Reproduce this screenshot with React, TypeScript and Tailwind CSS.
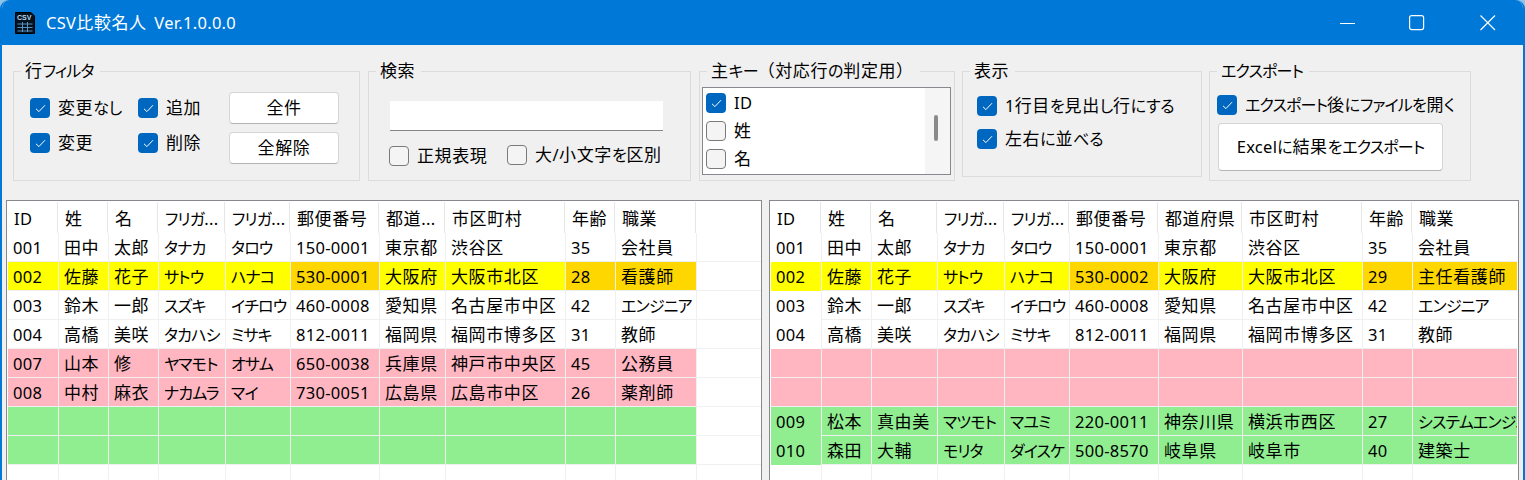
import type { ReactNode } from 'react';

type Row = { kind: 'same' | 'changed' | 'deleted' | 'added' | 'empty'; cells: string[]; gold?: number[] };

const blank = ['', '', '', '', '', '', '', '', '', ''];

const leftRows: Row[] = [
  { kind: 'same', cells: ['001', '田中', '太郎', 'タナカ', 'タロウ', '150-0001', '東京都', '渋谷区', '35', '会社員'] },
  { kind: 'changed', cells: ['002', '佐藤', '花子', 'サトウ', 'ハナコ', '530-0001', '大阪府', '大阪市北区', '28', '看護師'], gold: [5, 8, 9] },
  { kind: 'same', cells: ['003', '鈴木', '一郎', 'スズキ', 'イチロウ', '460-0008', '愛知県', '名古屋市中区', '42', 'エンジニア'] },
  { kind: 'same', cells: ['004', '高橋', '美咲', 'タカハシ', 'ミサキ', '812-0011', '福岡県', '福岡市博多区', '31', '教師'] },
  { kind: 'deleted', cells: ['007', '山本', '修', 'ヤマモト', 'オサム', '650-0038', '兵庫県', '神戸市中央区', '45', '公務員'] },
  { kind: 'deleted', cells: ['008', '中村', '麻衣', 'ナカムラ', 'マイ', '730-0051', '広島県', '広島市中区', '26', '薬剤師'] },
  { kind: 'added', cells: blank },
  { kind: 'added', cells: blank },
  { kind: 'empty', cells: blank },
];

const rightRows: Row[] = [
  { kind: 'same', cells: ['001', '田中', '太郎', 'タナカ', 'タロウ', '150-0001', '東京都', '渋谷区', '35', '会社員'] },
  { kind: 'changed', cells: ['002', '佐藤', '花子', 'サトウ', 'ハナコ', '530-0002', '大阪府', '大阪市北区', '29', '主任看護師'], gold: [5, 8, 9] },
  { kind: 'same', cells: ['003', '鈴木', '一郎', 'スズキ', 'イチロウ', '460-0008', '愛知県', '名古屋市中区', '42', 'エンジニア'] },
  { kind: 'same', cells: ['004', '高橋', '美咲', 'タカハシ', 'ミサキ', '812-0011', '福岡県', '福岡市博多区', '31', '教師'] },
  { kind: 'deleted', cells: blank },
  { kind: 'deleted', cells: blank },
  { kind: 'added', cells: ['009', '松本', '真由美', 'マツモト', 'マユミ', '220-0011', '神奈川県', '横浜市西区', '27', 'システムエンジニア'] },
  { kind: 'added', cells: ['010', '森田', '大輔', 'モリタ', 'ダイスケ', '500-8570', '岐阜県', '岐阜市', '40', '建築士'] },
  { kind: 'empty', cells: blank },
];

const leftHead = ['ID', '姓', '名', 'フリガ...', 'フリガ...', '郵便番号', '都道...', '市区町村', '年齢', '職業', ''];
const rightHead = ['ID', '姓', '名', 'フリガ...', 'フリガ...', '郵便番号', '都道府県', '市区町村', '年齢', '職業'];

const rowBg = {
  same: 'bg-white',
  empty: 'bg-white',
  changed: 'bg-[#ffff00]',
  deleted: 'bg-[#ffb6c1]',
  added: 'bg-[#90ee90]',
};

const idShadow = {
  same: 'shadow-[0_1px_0_#ffffff]',
  empty: '',
  changed: 'shadow-[0_1px_0_#ffff00]',
  deleted: '',
  added: 'shadow-[0_1px_0_#90ee90]',
};

// the original font sets kana and latin narrower than kanji, so runs get their own size
function Txt({ children }: { children: string }) {
  const runs = children.match(/[ァ-ヶー]+|[ぁ-ん]+|[\x20-\x7e]+|[^ァ-ヶーぁ-ん\x20-\x7e]+/g) ?? [];
  return (
    <span>
      {runs.map((run, i) => {
        let cls = 'tracking-[0.6px]';
        if (/^[ァ-ヶー]/.test(run)) cls = "text-[16px] tracking-[-0.85px] [font-feature-settings:'palt']";
        else if (/^[ぁ-ん]/.test(run)) cls = "text-[16px] tracking-[-0.2px] [font-feature-settings:'palt']";
        else if (/^[\x20-\x7e]/.test(run)) cls = 'text-[16.5px] tracking-[0.3px]';
        return <span key={i} className={cls}>{run}</span>;
      })}
    </span>
  );
}

function Table({ head, rows, cols, boxW, mergeId, filler }: { head: string[]; rows: Row[]; cols: string; boxW: string; mergeId?: boolean; filler?: boolean }) {
  return (
    <div className={`${boxW} h-[300px] border border-[#868a8e] bg-white overflow-hidden shrink-0`}>
      <div className="pt-px">
        <div className={`grid gap-px w-fit bg-[#e6e6e6] ${cols}`}>
          {head.map((h, i) => (
            <div key={i} className="h-[31px] bg-white pl-[7px] pt-[2px] flex items-center whitespace-nowrap overflow-hidden">
              <Txt>{h}</Txt>
            </div>
          ))}
        </div>
      </div>
      <div>
        {rows.map((row, r) => (
          <div key={r} className="ml-px w-fit bg-[#f0f0f0] pb-px">
            <div className={`grid gap-px w-fit ${cols}`}>
              {row.cells.map((c, i) => (
                <div
                  key={i}
                  className={`h-[28px] pl-[5px] pt-px flex items-center whitespace-nowrap overflow-hidden ${row.gold?.includes(i) ? 'bg-[#ffd700]' : rowBg[row.kind]} ${mergeId && i === 0 ? idShadow[row.kind] : ''}`}
                >
                  <Txt>{c}</Txt>
                </div>
              ))}
              {filler && <div className="h-[28px] bg-white" />}
            </div>
          </div>
        ))}
      </div>
    </div>
  );
}

function Box({ checked }: { checked?: boolean }) {
  if (!checked) return <span className="block size-5 shrink-0 rounded-[4px] border border-[#7a7a7a] bg-[#f4f4f4]" />;
  return (
    <span className="flex size-5 shrink-0 items-center justify-center rounded-[4px] bg-[#0067c0]">
      <svg width="11" height="9" viewBox="0 0 11 9" fill="none" stroke="#ffffff" strokeWidth="1">
        <path d="M1 4.8 L3.9 7.6 L10 1.2" />
      </svg>
    </span>
  );
}

function Check({ label, checked = true, className = '' }: { label: string; checked?: boolean; className?: string }) {
  return (
    <label className={`flex items-center gap-[8px] h-5 whitespace-nowrap ${className}`}>
      <Box checked={checked} />
      <Txt>{label}</Txt>
    </label>
  );
}

function Group({ title, className, children }: { title: string; className: string; children: ReactNode }) {
  return (
    <fieldset className={`border border-[#dcdcdc] shrink-0 ${className}`}>
      <legend className="ml-[7px] pl-[4px] pr-[6px] h-6 leading-[24px]"><Txt>{title}</Txt></legend>
      {children}
    </fieldset>
  );
}

function Btn({ children, className }: { children: string; className: string }) {
  return (
    <button className={`flex items-center justify-center rounded-[4px] border border-[#d4d4d4] border-b-[#b4b4b4] bg-white ${className}`}>
      <Txt>{children}</Txt>
    </button>
  );
}

function AppIcon() {
  return (
    <svg width="20" height="22" viewBox="0 0 20 22" className="shrink-0">
      <path d="M0.5 0.5 H16 L19.5 4 V21.5 H0.5 Z" fill="#04121f" stroke="#000000" />
      <text x="2" y="7.5" fontSize="7" fontWeight="700" fill="#b9d8ee" fontFamily="Liberation Sans, sans-serif">CSV</text>
      <path d="M2.5 12 H17.5 M2.5 15.5 H17.5 M2.5 19 H17.5 M7.5 10 V20 M12.5 10 V20" stroke="#5f9fd0" strokeWidth="0.9" />
    </svg>
  );
}

export default function App() {
  return (
    <div className="w-[1525px] h-[480px] overflow-hidden bg-[#8cc4ea] [font-family:'Noto_Sans','Noto_Sans_CJK_JP',sans-serif] text-[17px] text-black">
      <div className="h-full rounded-t-[9px] overflow-hidden border-x-2 border-[#0078d7] bg-[#f0f0f0] flex flex-col">
        <div className="h-[45px] bg-[#0078d7] flex items-center text-white shrink-0">
          <div className="ml-[13px]"><AppIcon /></div>
          <span className="ml-[11px] [word-spacing:3px]"><Txt>CSV比較名人 Ver.1.0.0.0</Txt></span>
          <div className="ml-auto flex items-center">
            <svg width="16" height="16" viewBox="0 0 16 16" stroke="#ffffff" fill="none" className="mr-[53px]"><path d="M0 8.5 H15" /></svg>
            <svg width="16" height="16" viewBox="0 0 16 16" stroke="#ffffff" fill="none" strokeWidth="1.2" className="mr-[55px]"><rect x="0.6" y="0.6" width="14" height="14" rx="2" /></svg>
            <svg width="16" height="16" viewBox="0 0 16 16" stroke="#ffffff" fill="none" strokeWidth="1.1" className="mr-[27px]"><path d="M0.5 0.5 L15 15 M15 0.5 L0.5 15" /></svg>
          </div>
        </div>

        <div className="h-[155px] shrink-0 pt-[14px] pl-[11px] flex items-start">
          <Group title="行フィルタ" className="w-[347px] h-[122px]">
            <div className="flex pl-[16px] pt-[9px]">
              <div className="grid grid-cols-[108px_91px] gap-y-[15px] pt-[6px] h-fit">
                <Check label="変更なし" />
                <Check label="追加" />
                <Check label="変更" />
                <Check label="削除" />
              </div>
              <div className="flex flex-col gap-2">
                <Btn className="w-[110px] h-[32px]">全件</Btn>
                <Btn className="w-[110px] h-[32px]">全解除</Btn>
              </div>
            </div>
          </Group>

          <Group title="検索" className="ml-2 w-[323px] h-[122px]">
            <div className="pt-[18px] pl-[20px]">
              <input className="block ml-px w-[273px] h-[30px] bg-white border-b border-[#868686] outline-none" />
              <div className="mt-[15px] flex items-start">
                <Check label="正規表現" checked={false} className="w-[118px]" />
                <Check label="大/小文字を区別" checked={false} className="-mt-px" />
              </div>
            </div>
          </Group>

          <Group title="主キー（対応行の判定用）" className="ml-2 w-[256px] h-[122px]">
            <div className="ml-[2px] mt-[4px] w-[249px] h-[88px] border border-[#868a8e] bg-white flex">
              <div className="flex-1 flex flex-col gap-2 pl-[3px] pt-[5px]">
                <Check label="ID" />
                <Check label="姓" checked={false} />
                <Check label="名" checked={false} />
              </div>
              <div className="w-[25px] bg-[#f5f5f5] pl-[9px] pt-[27px]">
                <div className="w-[4px] h-[26px] rounded-full bg-[#8a8a8a]" />
              </div>
            </div>
          </Group>

          <Group title="表示" className="ml-[7px] w-[240px] h-[118px]">
            <div className="pl-[14px] pt-[13px] flex flex-col gap-[13px]">
              <Check label="1行目を見出し行にする" />
              <Check label="左右に並べる" />
            </div>
          </Group>

          <Group title="エクスポート" className="ml-[7px] w-[262px] h-[122px]">
            <div className="pl-[7px] pt-[12px]">
              <Check label="エクスポート後にファイルを開く" />
              <Btn className="ml-px mt-[8px] w-[225px] h-[48px]">Excelに結果をエクスポート</Btn>
            </div>
          </Group>
        </div>

        <div className="flex pl-[4px] gap-[7px]">
          <Table
            head={leftHead}
            rows={leftRows}
            boxW="w-[756px]"
            cols="grid-cols-[50px_49px_49px_66px_64px_88px_65px_119px_49px_80px_64px]"
            filler
          />
          <Table
            head={rightHead}
            rows={rightRows}
            boxW="w-[750px]"
            cols="grid-cols-[50px_49px_65px_66px_64px_88px_83px_119px_49px_104px]"
            mergeId
          />
        </div>
      </div>
    </div>
  );
}
